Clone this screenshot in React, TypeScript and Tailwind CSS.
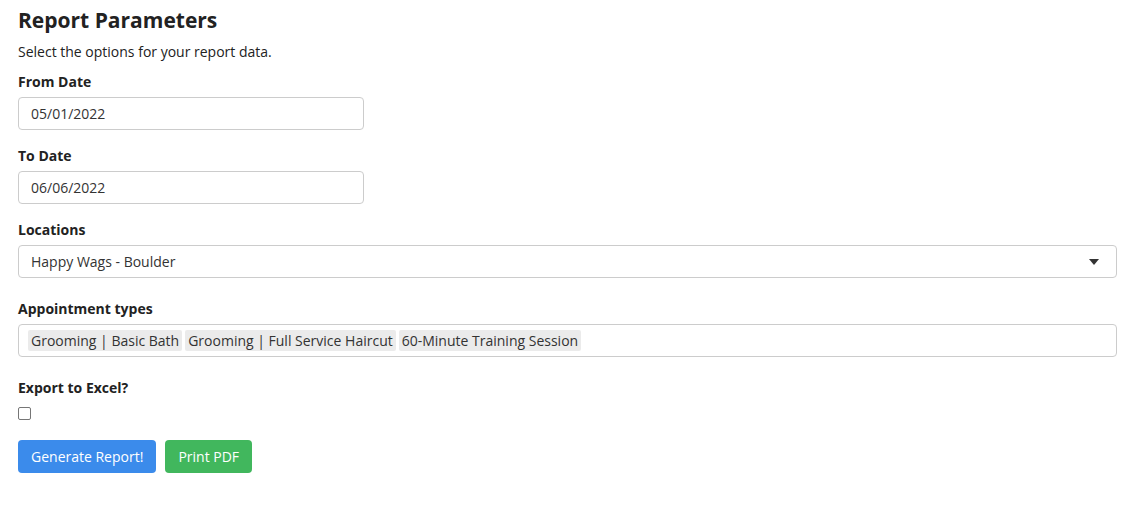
import React, { useState } from 'react';

// Report parameters form

const labelCls = 'block text-[14px] leading-[18px] font-bold text-[#222]';
const boxCls =
    'h-[33px] rounded-[4px] border border-[#cccccc] bg-white px-3 text-[14px] text-[#333] flex items-center';

const appointmentTypes = [
    'Grooming | Basic Bath',
    'Grooming | Full Service Haircut',
    '60-Minute Training Session',
];

const App: React.FC = () => {
    const [fromDate, setFromDate] = useState('05/01/2022');
    const [toDate, setToDate] = useState('06/06/2022');
    const [exportExcel, setExportExcel] = useState(false);

    return (
        <div
            className="min-h-[508px] bg-white pl-[18px] pr-[7px] pt-[7px] text-[#222]"
            style={{ fontFamily: '"Open Sans", "Liberation Sans", sans-serif' }}
        >
            <h1 className="text-[21px] leading-[27px] font-bold text-[#222]">Report Parameters</h1>
            <p className="mt-[9px] text-[14px] leading-[18px]">Select the options for your report data.</p>

            <label className={`${labelCls} mt-[12px]`}>From Date</label>
            <input
                value={fromDate}
                onChange={(e) => setFromDate(e.target.value)}
                className={`${boxCls} mt-[6px] w-[346px] outline-none`}
            />

            <label className={`${labelCls} mt-[17px]`}>To Date</label>
            <input
                value={toDate}
                onChange={(e) => setToDate(e.target.value)}
                className={`${boxCls} mt-[6px] w-[346px] outline-none`}
            />

            <label className={`${labelCls} mt-[17px]`}>Locations</label>
            <div className={`${boxCls} mt-[6px] w-full justify-between`}>
                <span>Happy Wags - Boulder</span>
                <svg width="10" height="6" viewBox="0 0 10 6" className="mr-[5px]">
                    <path d="M0 0h10L5 6z" fill="#333" />
                </svg>
            </div>

            <label className={`${labelCls} mt-[22px]`}>Appointment types</label>
            <div className={`${boxCls} mt-[6px] w-full gap-[3px] !px-[9px]`}>
                {appointmentTypes.map((t) => (
                    <span key={t} className="rounded-[2px] bg-[#ebebeb] px-[3px] leading-[21px]">
                        {t}
                    </span>
                ))}
            </div>

            <label className={`${labelCls} mt-[22px]`}>Export to Excel?</label>
            <input
                type="checkbox"
                checked={exportExcel}
                onChange={(e) => setExportExcel(e.target.checked)}
                className="mt-[10px] block h-[13px] w-[13px] appearance-none rounded-[2px] border border-[#767676] bg-white checked:bg-[#3b8beb]"
            />

            <div className="mt-[20px] flex gap-[9px]">
                <button className="h-[33px] rounded-[4px] bg-[#3b8beb] px-[13px] text-[14px] text-white">
                    Generate Report!
                </button>
                <button className="h-[33px] rounded-[4px] bg-[#41b75d] px-[13px] text-[14px] text-white">
                    Print PDF
                </button>
            </div>
        </div>
    );
};

export default App;
